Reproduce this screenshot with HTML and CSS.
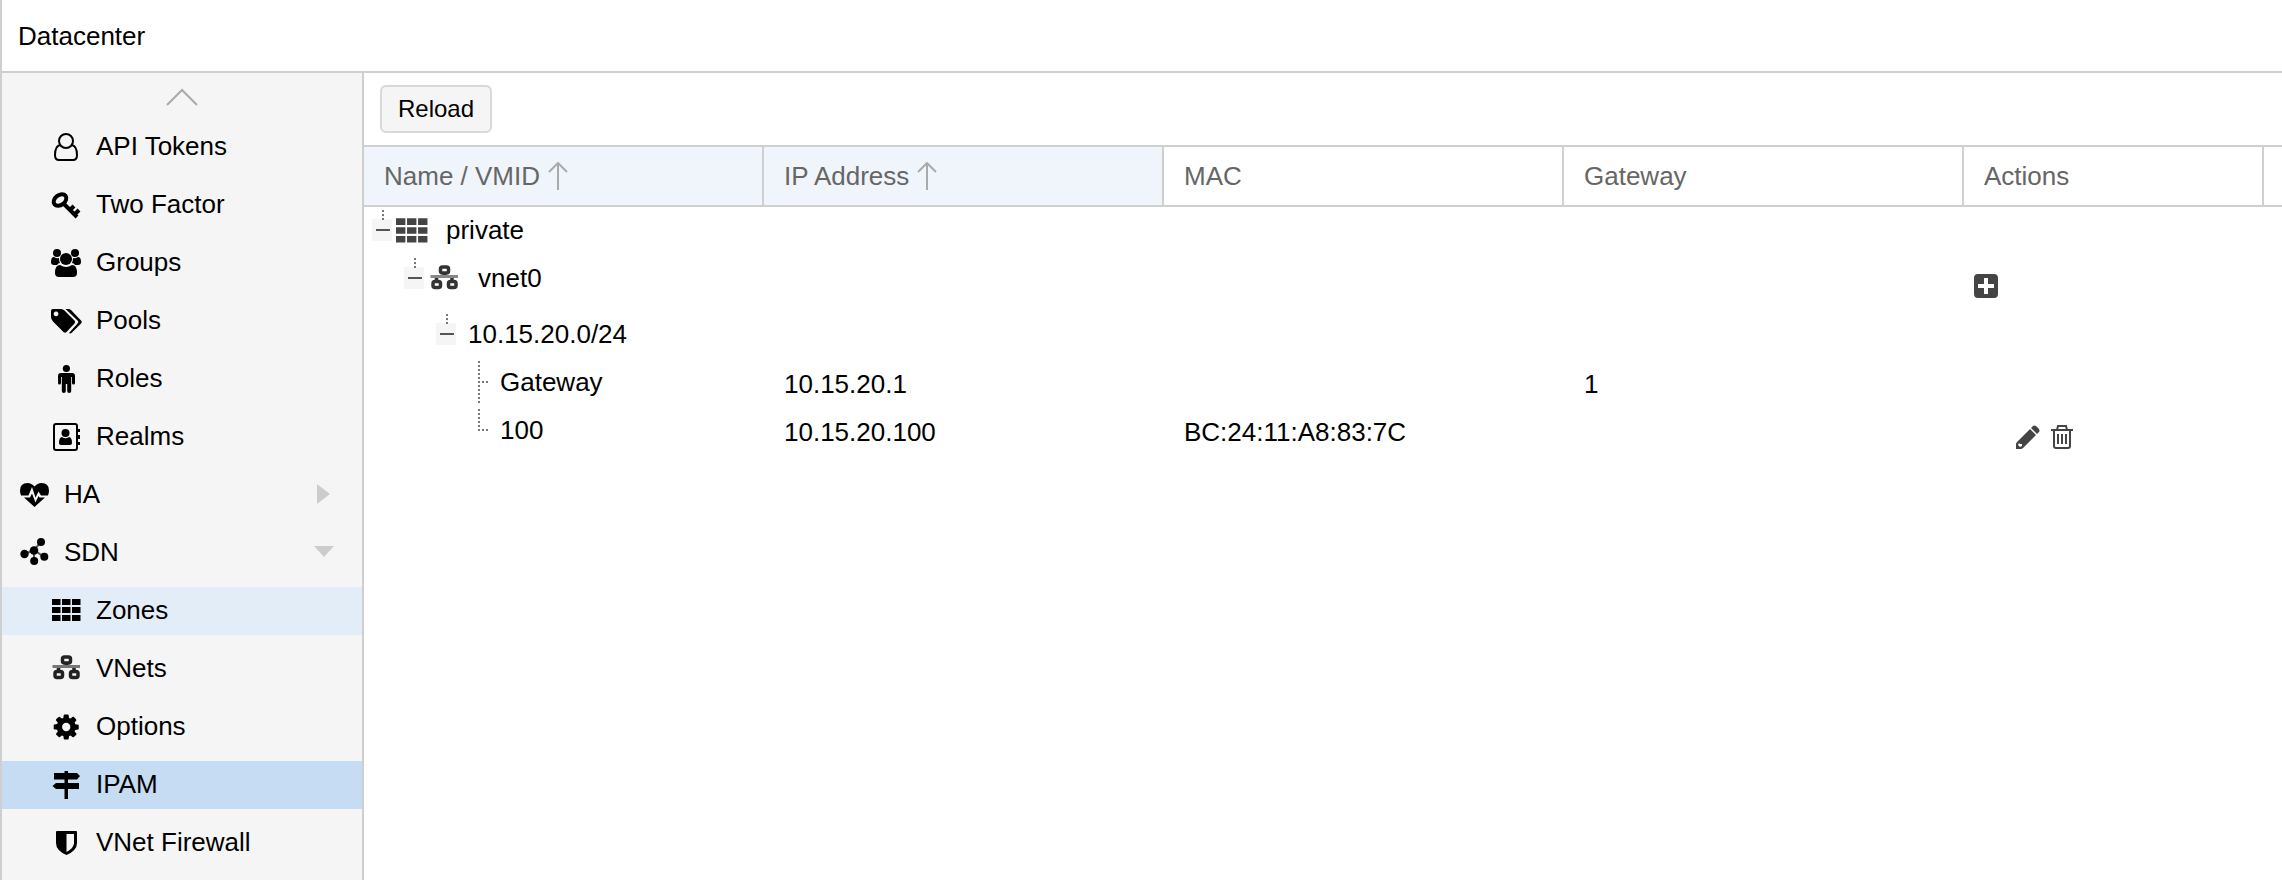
FILE: index.html
```html
<!DOCTYPE html>
<html lang="en">
<head>
  <meta charset="UTF-8">
  <meta name="viewport" content="width=device-width, initial-scale=1.0">
  <title>Datacenter - IPAM</title>
  <link rel="stylesheet" href="styles.css">
</head>
<body>
  <div class="panel">
    <header class="title">Datacenter</header>

    <div class="content">
      <nav class="sidebar" aria-label="Datacenter">
        <button class="scroll-up" aria-label="Scroll up">
          <svg width="32" height="18" viewBox="0 0 32 18"><path d="M1 17L16 2l15 15" fill="none" stroke="#aaa" stroke-width="2"/></svg>
        </button>
        <a class="item sub" href="#tokens">
          <svg class="icon" viewBox="0 0 32 32"><g fill="none" stroke="#000" stroke-width="2"><circle cx="16" cy="10" r="7"/><path d="M10 14c-4 1-5 6-5 10 0 3 1 5 4 5h14c3 0 4-2 4-5 0-4-1-9-5-10"/></g></svg>
          API Tokens
        </a>
        <a class="item sub" href="#tfa">
          <svg class="icon" viewBox="0 0 32 32"><g fill="none" stroke="#000" stroke-width="4"><ellipse cx="10" cy="11" rx="7" ry="5" transform="rotate(-38 10 11)"/><path d="M14 15l13 13M20 21l4-4M25 25l4-4"/></g></svg>
          Two Factor
        </a>
        <a class="item sub" href="#groups">
          <svg class="icon" viewBox="0 0 32 32"><circle cx="7" cy="6" r="4"/><circle cx="25" cy="6" r="4"/><path d="M1 15q0-5 3-5 3 2 5 1 0 3 1 5-2 0-3 2H4q-3 0-3-3zM31 15q0-5-3-5-3 2-5 1 0 3-1 5 2 0 3 2h3q3 0 3-3z"/><circle cx="16" cy="12" r="6"/><path d="M5 26q0-8 5-8 6 4 12 0 5 0 5 8 0 4-4 4H9q-4 0-4-4z"/></svg>
          Groups
        </a>
        <a class="item sub" href="#pools">
          <svg class="icon" viewBox="0 0 32 32"><path fill-rule="evenodd" d="M1 6q0-2 2-2h8q2 0 3.500 1.500l10 10q1.500 1.500 0 3l-8 8.500q-1.500 1.500-3 0L3 16.500Q1 14.500 1 12zM6 6.500a2.400 2.400 0 1 0 .1 0z"/><path d="M15.500 4h3q1.500 0 2.500 1l10 10.500q1.500 1.500 0 3L22 27.500q-1.500 1.500-3 .5l8.500-9.500q1.500-1.500 0-3z"/></svg>
          Pools
        </a>
        <a class="item sub" href="#roles">
          <svg class="icon" viewBox="0 0 32 32"><circle cx="16.400" cy="5.500" r="3.600"/><path d="M11 10h11q3 0 3 3v7q0 1.500-1.500 1.500T22 20v-6h-.8v14q0 2-2 2t-2-2v-7h-1.400v7q0 2-2 2t-2-2V14H11v6q0 1.500-1.500 1.500T8 20v-7q0-3 3-3z"/></svg>
          Roles
        </a>
        <a class="item sub" href="#realms">
          <svg class="icon" viewBox="0 0 32 32"><rect x="4" y="3" width="23" height="26" rx="2" fill="none" stroke="#000" stroke-width="2"/><path d="M27 8h3v3h-3zM27 14h3v4h-3zM27 21h3v3h-3z"/><circle cx="15.500" cy="12" r="4"/><path d="M9 22q0-5.500 3-6 3.500 2.500 7 0 3 .5 3 6 0 2-2 2h-9q-2 0-2-2z"/></svg>
          Realms
        </a>
        <a class="item" href="#ha">
          <svg class="icon" viewBox="0 0 32 32"><path d="M16.500 28L6 18.500h6l2-4 3.500 9 3-6.500 1 1.500H27zM3 16.500Q2 14 2 11.500 2 4 9.500 4q4 0 7 3.500 3-3.500 7-3.500Q31 4 31 11.500q0 2.500-1 5h-7l-2.500-4-3 6L14 8l-3.500 8.500z"/></svg>
          HA
          <svg class="expander" viewBox="0 0 20 20"><path d="M3 0l13 10L3 20z"/></svg>
        </a>
        <a class="item" href="#sdn">
          <svg class="icon" viewBox="0 0 32 32"><path d="M23 5l-7 8-9 4M26 20l-10-7v11" fill="none" stroke="#555" stroke-width="2"/><circle cx="23" cy="5" r="4"/><circle cx="16" cy="13.500" r="4.300"/><circle cx="6.500" cy="17" r="4.200"/><circle cx="26.300" cy="19.700" r="4"/><circle cx="16.200" cy="24" r="4"/></svg>
          SDN
          <svg class="expander" viewBox="0 0 20 20"><path d="M0 4h20L10 15z"/></svg>
        </a>
        <a class="item sub hover" href="#zones">
          <svg class="icon" viewBox="0 0 32 32"><path d="M2 4h8.500v6H2zM12 4h8.500v6H12zM22 4h8.500v6H22zM2 12h8.500v6H2zM12 12h8.500v6H12zM22 12h8.500v6H22zM2 20h8.500v6H2zM12 20h8.500v6H12zM22 20h8.500v6H22z"/></svg>
          Zones
        </a>
        <a class="item sub" href="#vnets">
          <svg class="icon" viewBox="0 0 32 32"><g fill="none" stroke="#222" stroke-width="3.500"><rect x="12.500" y="4" width="8" height="6" rx="2"/><rect x="5" y="18.500" width="7.500" height="6" rx="2"/><rect x="20.500" y="18.500" width="7.500" height="6" rx="2"/><path d="M16.500 10v4M8.500 14v5M24 14v5"/><path d="M2.500 13.500H30" stroke="#777" stroke-width="3"/></g></svg>
          VNets
        </a>
        <a class="item sub" href="#options">
          <svg class="icon" viewBox="-100 -87 1966 1966"><path d="M1152 896q0-106-75-181t-181-75-181 75-75 181 75 181 181 75 181-75 75-181zm512-109v222q0 12-8 23t-20 13l-185 28q-19 54-39 91 35 50 107 138 10 12 10 25t-9 23q-27 37-99 108t-94 71q-12 0-26-9l-138-108q-44 23-91 38-16 136-29 186-7 28-36 28h-222q-14 0-24.500-8.500t-11.500-21.500l-28-184q-49-16-90-37l-141 107q-10 9-25 9-14 0-25-11-126-114-165-168-7-10-7-23 0-12 8-23 15-21 51-66.500t54-70.500q-27-50-41-99l-183-27q-13-2-21-12.500t-8-23.500v-222q0-12 8-23t19-13l186-28q14-46 39-92-40-57-107-138-10-12-10-24 0-10 9-23 26-36 98.500-107.500t94.500-71.500q13 0 26 10l138 107q44-23 91-38 16-136 29-186 7-28 36-28h222q14 0 24.500 8.500t11.500 21.500l28 184q49 16 90 37l142-107q9-9 24-9 13 0 25 10 129 119 165 170 7 8 7 22 0 12-8 23-15 21-51 66.500t-54 70.500q26 50 41 98l183 28q13 2 21 12.500t8 23.500z"/></svg>
          Options
        </a>
        <a class="item sub selected" href="#ipam" aria-current="page">
          <svg class="icon" viewBox="0 0 32 32"><path d="M14.500 2h3.500v2h9l3 3-3 3.500H18v3.500h11v6H18v10h-3.500V20H6l-3.500-3L6 14h8.500v-3.500H4V4h10.500z"/></svg>
          IPAM
        </a>
        <a class="item sub" href="#firewall">
          <svg class="icon" viewBox="0 0 32 32"><path fill-rule="evenodd" d="M7 4h19q1 0 1 1v11q0 7.500-10.500 12Q6 23.500 6 16V5q0-1 1-1zM16.500 7v18Q24 21 24 16V7z"/></svg>
          VNet Firewall
        </a>
      </nav>

      <main class="main">
        <div class="toolbar">
          <button class="reload">Reload</button>
        </div>

        <table class="grid">
          <colgroup>
            <col><col><col><col>
            <col class="col-actions">
            <col class="col-filler">
          </colgroup>
          <thead>
            <tr>
              <th class="sorted" scope="col">Name / VMID<svg class="sort" viewBox="0 0 20 28"><path d="M10 28V1M1 10l9-9 9 9"/></svg></th>
              <th class="sorted" scope="col">IP Address<svg class="sort" viewBox="0 0 20 28"><path d="M10 28V1M1 10l9-9 9 9"/></svg></th>
              <th scope="col">MAC</th>
              <th scope="col">Gateway</th>
              <th scope="col">Actions</th>
              <td class="filler"></td>
            </tr>
          </thead>
          <tbody>
            <tr>
              <td class="name">
                <div class="node">
                  <svg class="elbow" viewBox="0 0 28 48"><path class="box" d="M4 12h20v22H4z"/><path class="dots" d="M15 3v10"/><path class="minus" d="M8 23h14"/></svg>
                  <svg class="tree-icon" viewBox="2 1 29 29"><path d="M2 4h8.500v6H2zM12 4h8.500v6H12zM22 4h8.500v6H22zM2 12h8.500v6H2zM12 12h8.500v6H12zM22 12h8.500v6H22zM2 20h8.500v6H2zM12 20h8.500v6H12zM22 20h8.500v6H22z"/></svg>
                  <span class="text">private</span>
                </div>
              </td>
              <td></td><td></td><td></td><td></td><td></td>
            </tr>
            <tr class="vnet">
              <td class="name">
                <div class="node level-1">
                  <svg class="elbow" viewBox="0 0 28 48"><path class="box" d="M4 12h20v22H4z"/><path class="dots" d="M15 3v10"/><path class="minus" d="M8 23h14"/></svg>
                  <svg class="tree-icon" viewBox="0 0 32 32"><g fill="none" stroke="#333" stroke-width="3.500"><rect x="12.500" y="4" width="8" height="6" rx="2"/><rect x="5" y="18.500" width="7.500" height="6" rx="2"/><rect x="20.500" y="18.500" width="7.500" height="6" rx="2"/><path d="M16.500 10v4M8.500 14v5M24 14v5"/><path d="M2.500 13.500H30" stroke="#888" stroke-width="3"/></g></svg>
                  <span class="text">vnet0</span>
                </div>
              </td>
              <td></td><td></td><td></td>
              <td class="actions">
                <div class="tools">
                  <button aria-label="Add"><svg viewBox="0 0 24 24"><path fill-rule="evenodd" d="M4 0h16q4 0 4 4v16q0 4-4 4H4q-4 0-4-4V4q0-4 4-4zM10 4v6H4v4h6v6h4v-6h6v-4h-6V4z"/></svg></button>
                </div>
              </td>
              <td></td>
            </tr>
            <tr>
              <td class="name">
                <div class="node level-2">
                  <svg class="elbow" viewBox="0 0 28 48"><path class="box" d="M4 12h20v22H4z"/><path class="dots" d="M15 3v10"/><path class="minus" d="M8 23h14"/></svg>
                  <span class="text">10.15.20.0/24</span>
                </div>
              </td>
              <td></td><td></td><td></td><td></td><td></td>
            </tr>
            <tr>
              <td class="name">
                <div class="node level-3">
                  <svg class="elbow" viewBox="0 0 28 48"><path class="dots" d="M15 2v44M18 23h7"/></svg>
                  <span class="text">Gateway</span>
                </div>
              </td>
              <td>10.15.20.1</td><td></td><td>1</td><td></td><td></td>
            </tr>
            <tr>
              <td class="name">
                <div class="node level-3">
                  <svg class="elbow" viewBox="0 0 28 48"><path class="dots" d="M15 2v22M18 23h7"/></svg>
                  <span class="text">100</span>
                </div>
              </td>
              <td>10.15.20.100</td>
              <td>BC:24:11:A8:83:7C</td>
              <td></td>
              <td class="actions">
                <div class="tools edit">
                  <button aria-label="Edit"><svg viewBox="0 0 24 24"><path fill-rule="evenodd" d="M14 4l6 6L7 23q-1 1-2 1H0v-5q0-1 1-2zM3 18l-1 2 2 2 2-1v-2H4z"/><path d="M15 3l2-2q1-1 3 0l3 3q1 2 0 3l-2 2z"/></svg></button>
                  <button aria-label="Delete"><svg viewBox="0 0 24 24"><path fill="none" stroke="#444" stroke-width="2" d="M1 5h22M7 5l1-4h8l1 4M4 5v16q0 2 2 2h12q2 0 2-2V5M8 9v10M12 9v10M16 9v10"/></svg></button>
                </div>
              </td>
              <td></td>
            </tr>
          </tbody>
        </table>
      </main>
    </div>
  </div>
</body>
</html>
```

FILE: styles.css
```css
* { box-sizing: border-box; }
body { margin: 0; font-family: "Liberation Sans", Helvetica, Arial, sans-serif; font-size: 26px; line-height: 30px; color: #000; background: #fff; }
button { font: inherit; color: inherit; cursor: pointer; }
svg { display: block; flex: none; }

.panel { display: flex; flex-direction: column; min-height: 100vh; border-left: 2px solid #cfcfcf; }
.title { padding: 21px 16px 20px; border-bottom: 2px solid #cfcfcf; }
.content { display: flex; flex: 1; }

/* sidebar */
.sidebar { display: flex; flex-direction: column; gap: 10px; width: 362px; padding-bottom: 12px; background: #f5f5f5; border-right: 2px solid #cfcfcf; }
.scroll-up { display: flex; justify-content: center; height: 40px; padding: 15px 0 0; border: none; background: none; }
.item { display: flex; align-items: center; height: 48px; padding: 0 28px 2px 16px; color: #000; text-decoration: none; }
.item.sub { padding-left: 48px; }
.item.hover, .item:hover { background: #e3edf8; }
.item.selected { background: #c6dcf2; }
.icon { width: 32px; height: 32px; margin: 2px 14px 0 0; }
.expander { width: 20px; height: 20px; margin-left: auto; fill: #ccc; }

/* toolbar */
.main { flex: 1; min-width: 0; }
.toolbar { padding: 12px 16px; }
.reload { display: block; height: 48px; padding: 0 16px; font-size: 24px; background: #f5f5f5; border: 2px solid #d8d8d8; border-radius: 6px; }
.reload:hover { background: #ebebeb; }

/* tree grid */
.grid { width: 100%; table-layout: fixed; border-collapse: separate; border-spacing: 0; }
.col-actions { width: 300px; }
.col-filler { width: 18px; }
.grid th { height: 62px; padding: 0 20px; font-weight: normal; text-align: left; color: #666; border: solid #cfcfcf; border-width: 2px 2px 2px 0; white-space: nowrap; }
.grid th.sorted { background: #f0f5fc; }
.grid .filler { border: solid #cfcfcf; border-width: 2px 0; }
.sort { display: inline-block; width: 20px; height: 28px; margin-left: 8px; vertical-align: -5px; fill: none; stroke: #aaa; stroke-width: 2; }
.grid td { height: 48px; padding: 2px 20px 0; vertical-align: middle; }
.grid td.name { padding: 0 0 0 4px; vertical-align: top; }
.grid .vnet td { height: 56px; }

.node { display: flex; align-items: center; height: 48px; }
.level-1 { padding-left: 32px; }
.level-2 { padding-left: 64px; }
.level-3 { padding-left: 96px; }
.elbow { width: 28px; height: 48px; }
.elbow .box { fill: #f5f5f5; }
.elbow .dots { fill: none; stroke: #777; stroke-width: 2; stroke-dasharray: 2 2; }
.elbow .minus { fill: none; stroke: #555; stroke-width: 2; }
.tree-icon { width: 32px; height: 32px; margin-right: 10px; fill: #444; }
.text { padding: 0 0 2px 8px; }

.grid td.actions { padding: 6px 10px 0; }
.tools { display: flex; gap: 10px; }
.tools.edit { padding: 6px 0 0 42px; }
.tools button { padding: 0; border: none; background: none; }
.tools svg { width: 24px; height: 24px; fill: #444; }
```
